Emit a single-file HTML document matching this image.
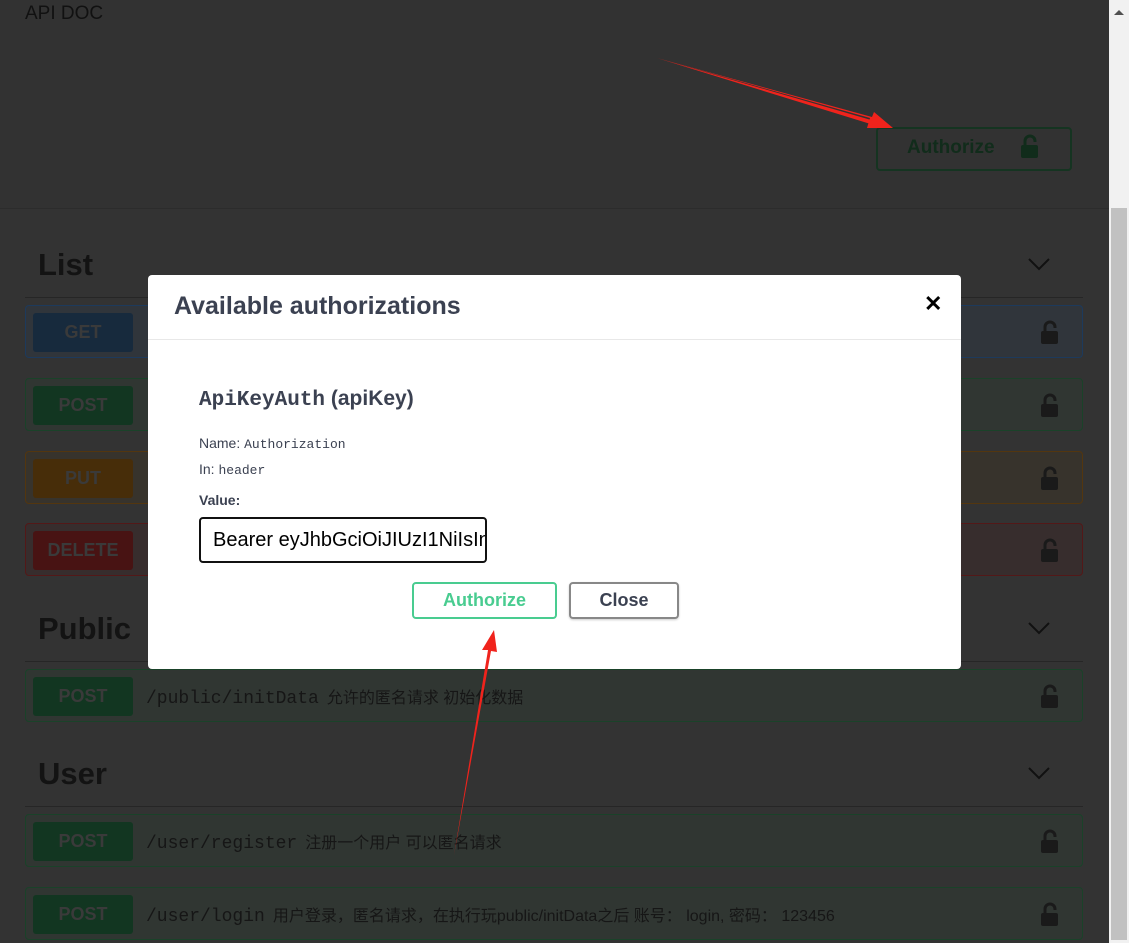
<!DOCTYPE html>
<html><head><meta charset="utf-8"><style>
body{margin:0;width:1129px;height:943px;overflow:hidden;background:#333;font-family:"Liberation Sans","Noto Sans CJK SC",sans-serif;position:relative}
.hdr{position:absolute;left:0;top:0;width:1109px;height:208px;background:#323232;border-bottom:1px solid #2c2c2c}
.sb{position:absolute;left:1109px;top:0;width:20px;height:943px;background:#f1f1f1}
.thumb{position:absolute;left:1111px;top:208px;width:16px;height:732px;background:#c1c1c1}
.t{position:absolute;color:#1a1a1a}
.h2{position:absolute;left:38px;font-size:31px;font-weight:bold;color:#131313}
.line{position:absolute;left:25px;width:1058px;height:1px;background:#262626}
.op{position:absolute;left:25px;width:1056px;height:51px;border:1px solid;border-radius:4px}
.m{position:absolute;left:7px;top:7px;width:100px;height:39px;border-radius:3px;color:#3a3a3a;font-weight:bold;font-size:18px;text-align:center;line-height:39px}
.path{position:absolute;left:120px;top:14px;font-family:"Liberation Mono",monospace;font-size:18px;color:#161616;white-space:nowrap}
.path span{font-family:"Liberation Sans","Noto Sans CJK SC",sans-serif;font-size:16px;margin-left:8px}
.lock{position:absolute;right:22px;top:14px}
.modal{position:absolute;left:148px;top:275px;width:813px;height:394px;background:#fff;border-radius:4px}
</style></head><body>
<div class="hdr"></div>
<div class="t" style="left:25px;top:3px;font-size:19px;color:#111">API DOC</div>
<div style="position:absolute;left:876px;top:127px;width:192px;height:40px;border:2px solid #153421;border-radius:4px"></div>
<div class="t" style="left:907px;top:137px;font-size:19px;font-weight:bold;color:#112c1b">Authorize</div>
<svg style="position:absolute;left:1020px;top:134px" width="20" height="24"><path d="M5 11V7a5 5 0 0 1 10 0v1" stroke="#112c1b" stroke-width="3" fill="none"/><rect x="1" y="11" width="17" height="13" rx="2" fill="#112c1b"/></svg>

<div class="h2" style="top:247px">List</div>
<svg style="position:absolute;left:1028px;top:258px" width="22" height="14"><path d="M1 1l10 10L21 1" stroke="#111" stroke-width="2" fill="none"/></svg>
<div class="line" style="top:297px"></div>
<div class="op" style="top:305px;border-color:#1d3a5c;background:#30353b"><div class="m" style="background:#172a3d">GET</div><div class="lock"><svg width="20" height="24"><path d="M5 11V7a5 5 0 0 1 10 0v1" stroke="#1a1a1a" stroke-width="3" fill="none"/><rect x="1" y="11" width="17" height="13" rx="2" fill="#1a1a1a"/></svg></div></div>
<div class="op" style="top:378px;border-color:#1a4229;background:#303632"><div class="m" style="background:#123621">POST</div><div class="lock"><svg width="20" height="24"><path d="M5 11V7a5 5 0 0 1 10 0v1" stroke="#1a1a1a" stroke-width="3" fill="none"/><rect x="1" y="11" width="17" height="13" rx="2" fill="#1a1a1a"/></svg></div></div>
<div class="op" style="top:451px;border-color:#53360f;background:#37332c"><div class="m" style="background:#472d09">PUT</div><div class="lock"><svg width="20" height="24"><path d="M5 11V7a5 5 0 0 1 10 0v1" stroke="#1a1a1a" stroke-width="3" fill="none"/><rect x="1" y="11" width="17" height="13" rx="2" fill="#1a1a1a"/></svg></div></div>
<div class="op" style="top:523px;border-color:#531818;background:#372d2d"><div class="m" style="background:#481313">DELETE</div><div class="lock"><svg width="20" height="24"><path d="M5 11V7a5 5 0 0 1 10 0v1" stroke="#1a1a1a" stroke-width="3" fill="none"/><rect x="1" y="11" width="17" height="13" rx="2" fill="#1a1a1a"/></svg></div></div>

<div class="h2" style="top:611px">Public</div>
<svg style="position:absolute;left:1028px;top:622px" width="22" height="14"><path d="M1 1l10 10L21 1" stroke="#111" stroke-width="2" fill="none"/></svg>
<div class="line" style="top:661px"></div>
<div class="op" style="top:669px;border-color:#1a4229;background:#303632"><div class="m" style="background:#123621">POST</div><div class="path">/public/initData<span>允许的匿名请求 初始化数据</span></div><div class="lock"><svg width="20" height="24"><path d="M5 11V7a5 5 0 0 1 10 0v1" stroke="#1a1a1a" stroke-width="3" fill="none"/><rect x="1" y="11" width="17" height="13" rx="2" fill="#1a1a1a"/></svg></div></div>

<div class="h2" style="top:756px">User</div>
<svg style="position:absolute;left:1028px;top:767px" width="22" height="14"><path d="M1 1l10 10L21 1" stroke="#111" stroke-width="2" fill="none"/></svg>
<div class="line" style="top:806px"></div>
<div class="op" style="top:814px;border-color:#1a4229;background:#303632"><div class="m" style="background:#123621">POST</div><div class="path">/user/register<span>注册一个用户 可以匿名请求</span></div><div class="lock"><svg width="20" height="24"><path d="M5 11V7a5 5 0 0 1 10 0v1" stroke="#1a1a1a" stroke-width="3" fill="none"/><rect x="1" y="11" width="17" height="13" rx="2" fill="#1a1a1a"/></svg></div></div>
<div class="op" style="top:887px;border-color:#1a4229;background:#303632"><div class="m" style="background:#123621">POST</div><div class="path">/user/login<span>用户登录，匿名请求，在执行玩public/initData之后 账号： login, 密码： 123456</span></div><div class="lock"><svg width="20" height="24"><path d="M5 11V7a5 5 0 0 1 10 0v1" stroke="#1a1a1a" stroke-width="3" fill="none"/><rect x="1" y="11" width="17" height="13" rx="2" fill="#1a1a1a"/></svg></div></div>

<div class="modal">
<div style="position:absolute;left:26px;top:17px;font-size:25px;font-weight:bold;color:#3b4151">Available authorizations</div>
<div style="position:absolute;left:776px;top:16px;font-size:22px;font-weight:bold;color:#000">✕</div>
<div style="position:absolute;left:0;top:64px;width:813px;height:1px;background:#e8e8e8"></div>
<div style="position:absolute;left:51px;top:112px;font-size:21px;font-weight:bold;color:#3b4151"><span style="font-family:'Liberation Mono',monospace">ApiKeyAuth</span> (apiKey)</div>
<div style="position:absolute;left:51px;top:160px;font-size:14px;color:#3b4151">Name: <span style="font-family:'Liberation Mono',monospace;font-size:13px">Authorization</span></div>
<div style="position:absolute;left:51px;top:186px;font-size:14px;color:#3b4151">In: <span style="font-family:'Liberation Mono',monospace;font-size:13px">header</span></div>
<div style="position:absolute;left:51px;top:217px;font-size:14px;font-weight:bold;color:#3b4151">Value:</div>
<div style="position:absolute;left:51px;top:242px;width:284px;height:42px;border:2px solid #111;border-radius:4px;overflow:hidden"><div style="position:absolute;left:12px;top:10px;font-size:20px;color:#000;white-space:nowrap">Bearer eyJhbGciOiJIUzI1NiIsInR5</div></div>
<div style="position:absolute;left:264px;top:307px;width:141px;height:33px;border:2px solid #49cc90;border-radius:4px;color:#49cc90;font-weight:bold;font-size:18px;text-align:center;line-height:33px">Authorize</div>
<div style="position:absolute;left:421px;top:307px;width:106px;height:33px;border:2px solid #888;border-radius:4px;color:#3b4151;font-weight:bold;font-size:18px;text-align:center;line-height:33px;box-shadow:0 1px 2px rgba(0,0,0,.2)">Close</div>
</div>

<div class="sb"></div><div class="thumb"></div>
<svg style="position:absolute;left:1113px;top:8px" width="12" height="8"><path d="M1 7L6 2l5 5z" fill="#505050"/></svg>

<svg style="position:absolute;left:0;top:0" width="1129" height="943">
<path d="M657 58 L870 118 L867 128 L893 128 L874 112 L872 117 Z" fill="#f0231c"/>
<path d="M657 58 L878 122 L877 126 Z" fill="#f0231c"/>
<path d="M454 855 L488 650 L482 650 L494 630 L497 652 L491 651 Z" fill="#f0231c"/>
</svg>
</body></html>
